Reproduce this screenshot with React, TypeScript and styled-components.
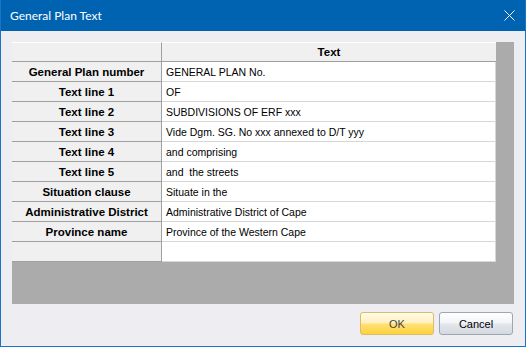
import React from "react";
import styled, { createGlobalStyle } from "styled-components";

const Global = createGlobalStyle`
  html, body { margin: 0; padding: 0; background: #ffffff; }
  * { box-sizing: border-box; }
`;

const Window = styled.div`
  width: 526px;
  height: 347px;
  display: flex;
  flex-direction: column;
  border: 1px solid #1a73c4;
  border-top: none;
  background: #eeedf2;
  overflow: hidden;
`;

const TitleBar = styled.div`
  height: 31px;
  margin: 0 -1px;
  background: #0063b1;
  display: flex;
  align-items: center;
  justify-content: space-between;
  padding: 0 11px 0 10px;
  flex: none;
`;

const Title = styled.span`
  color: #ffffff;
  font-family: Lato, "Noto Sans", sans-serif;
  font-size: 12px;
  line-height: 16px;
`;

const Client = styled.div`
  flex: 1;
  display: flex;
  flex-direction: column;
  padding: 11px 11px 10px 11px;
  gap: 8px;
`;

const GridArea = styled.div`
  height: 262px;
  background: #ababab;
  display: flex;
  flex-direction: column;
  align-items: flex-start;
`;

const Table = styled.div`
  width: 484px;
  display: grid;
  grid-template-columns: 150px 334px;
`;

const HeaderCorner = styled.div`
  height: 20px;
  background: #f0f0f0;
  border-top: 1px solid #ffffff;
  border-right: 1px solid #a0a0a0;
  border-bottom: 1px solid #a0a0a0;
`;

const HeaderCell = styled.div`
  height: 20px;
  background: #f0f0f0;
  border-top: 1px solid #ffffff;
  border-bottom: 1px solid #a0a0a0;
  font-family: "Liberation Sans", Arial, sans-serif;
  font-weight: bold;
  font-size: 11.5px;
  color: #000;
  display: flex;
  align-items: center;
  justify-content: center;
`;

const RowHeader = styled.div`
  height: 20px;
  background: #f0f0f0;
  border-right: 1px solid #a0a0a0;
  border-bottom: 1px solid #a0a0a0;
  font-family: "Liberation Sans", Arial, sans-serif;
  font-weight: bold;
  font-size: 11.5px;
  color: #000;
  display: flex;
  align-items: center;
  justify-content: center;
  white-space: nowrap;
`;

const DataCell = styled.div`
  height: 20px;
  background: #ffffff;
  border-bottom: 1px solid #d8d8d8;
  border-right: 1px solid #d8d8d8;
  font-family: "Liberation Sans", Arial, sans-serif;
  font-size: 10.5px;
  color: #000;
  display: flex;
  align-items: center;
  padding-left: 4px;
  white-space: pre;
`;

const ButtonRow = styled.div`
  display: flex;
  justify-content: flex-end;
  gap: 5px;
  padding-right: 1px;
`;

const Button = styled.button<{ $primary?: boolean }>`
  width: 74px;
  height: 23px;
  border-radius: 3px;
  font-family: "Liberation Sans", Arial, sans-serif;
  font-size: 11px;
  color: ${(p) => (p.$primary ? "#444" : "#000")};
  padding: 0;
  border: 1px solid ${(p) => (p.$primary ? "#d9bd69" : "#9ea6ae")};
  background: ${(p) =>
    p.$primary
      ? "linear-gradient(to bottom, #fffbe8 0%, #fff1c2 45%, #ffdf70 55%, #ffd23c 100%)"
      : "linear-gradient(to bottom, #ffffff 0%, #f3f5f8 45%, #e2e6ec 55%, #d4d9e0 100%)"};
`;

const rows: [string, string][] = [
  ["General Plan number", "GENERAL PLAN No."],
  ["Text line 1", "OF"],
  ["Text line 2", "SUBDIVISIONS OF ERF xxx"],
  ["Text line 3", "Vide Dgm. SG. No xxx annexed to D/T yyy"],
  ["Text line 4", "and comprising"],
  ["Text line 5", "and  the streets"],
  ["Situation clause", "Situate in the"],
  ["Administrative District", "Administrative District of Cape"],
  ["Province name", "Province of the Western Cape"],
  ["", ""],
];

export default function App() {
  return (
    <>
      <Global />
      <Window>
        <TitleBar>
          <Title>General Plan Text</Title>
          <svg width="11" height="11" viewBox="0 0 11 11">
            <path d="M0.5 0.5 L10.5 10.5 M10.5 0.5 L0.5 10.5" stroke="#ffffff" strokeWidth="1" />
          </svg>
        </TitleBar>
        <Client>
          <GridArea>
            <Table>
              <HeaderCorner />
              <HeaderCell>Text</HeaderCell>
              {rows.map(([h, v], i) => (
                <React.Fragment key={i}>
                  <RowHeader>{h}</RowHeader>
                  <DataCell>{v}</DataCell>
                </React.Fragment>
              ))}
            </Table>
          </GridArea>
          <ButtonRow>
            <Button $primary>OK</Button>
            <Button>Cancel</Button>
          </ButtonRow>
        </Client>
      </Window>
    </>
  );
}
